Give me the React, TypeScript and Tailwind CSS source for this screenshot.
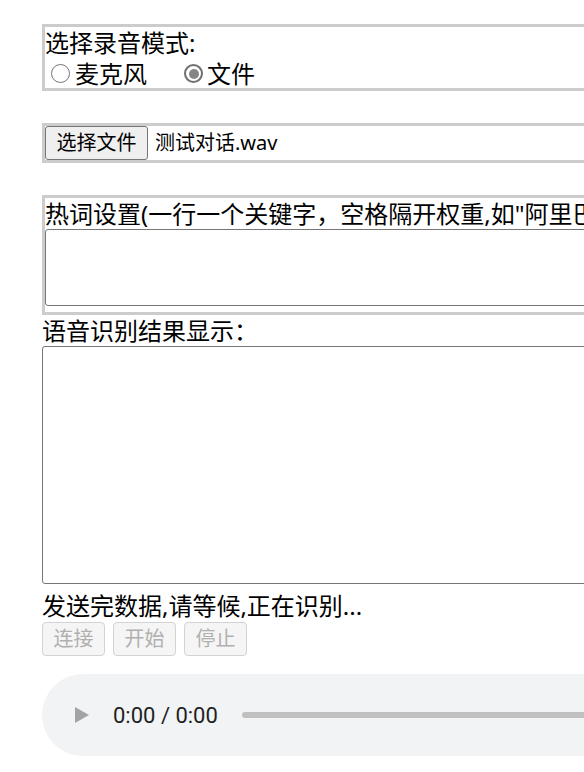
import React from "react"

function Radio({ checked }: { checked?: boolean }) {
  return (
    <span
      className={
        checked
          ? "inline-flex h-[19px] w-[19px] shrink-0 items-center justify-center rounded-full border-2 border-[#6f6f6f] bg-white"
          : "inline-flex h-[19px] w-[19px] shrink-0 items-center justify-center rounded-full border-[1.5px] border-[#767676] bg-white"
      }
    >
      {checked && <span className="h-[10px] w-[10px] rounded-full bg-[#858585]" />}
    </span>
  )
}

function DisabledButton({ label }: { label: string }) {
  return (
    <button
      disabled
      className="flex h-[34px] w-[63px] items-center justify-center rounded-[4px] border border-[#d3d3d3] bg-[#f5f5f5] text-[20px] leading-none text-[#b0b0b0]"
    >
      {label}
    </button>
  )
}

export default function App() {
  return (
    <div className="h-[772px] w-[584px] overflow-hidden bg-white font-['Noto_Sans','Noto_Sans_CJK_SC',sans-serif] text-[24px] text-black">
      <div className="ml-[42px] w-[760px] pt-[24px]">
        {/* recorder mode */}
        <div className="border-[3px] border-[#cccccc]">
          <div className="h-[32px] leading-[32px] whitespace-nowrap">选择录音模式:</div>
          <div className="flex h-[29px] items-center whitespace-nowrap">
            <label className="ml-[6px] flex items-center gap-[5px]">
              <Radio />
              <span>麦克风</span>
            </label>
            <label className="ml-[37px] flex items-center gap-[4px]">
              <Radio checked />
              <span>文件</span>
            </label>
          </div>
        </div>

        <div className="h-[32px]" />

        {/* file picker */}
        <div className="flex h-[40px] items-center border-[3px] border-[#cccccc]">
          <button className="flex h-[34px] w-[103px] items-center justify-center rounded-[3px] border border-[#767676] bg-[#efefef] text-[20px] leading-none">
            选择文件
          </button>
          <span className="ml-[7px] text-[20px] whitespace-nowrap">测试对话.wav</span>
        </div>

        <div className="h-[32px]" />

        {/* hotwords */}
        <div className="border-[3px] border-[#cccccc] pb-[6px]">
          <div className="h-[31px] leading-[31px] whitespace-nowrap">
            热词设置(一行一个关键字，空格隔开权重,如"阿里巴巴 20")：
          </div>
          <textarea
            readOnly
            className="block h-[77px] w-full resize-none rounded-[3px] border border-[#767676] bg-white"
          />
        </div>

        <div className="h-[31px] leading-[31px] whitespace-nowrap">语音识别结果显示：</div>
        <textarea
          readOnly
          className="block h-[238px] w-full resize-none rounded-[3px] border border-[#767676] bg-white"
        />

        <div className="mt-[6px] h-[32px] leading-[32px] whitespace-nowrap">发送完数据,请等候,正在识别...</div>

        <div className="flex gap-[8px]">
          <DisabledButton label="连接" />
          <DisabledButton label="开始" />
          <DisabledButton label="停止" />
        </div>

        {/* audio player */}
        <div className="mt-[18px] flex h-[82px] w-full items-center rounded-full bg-[#f1f3f4] pl-[33px]">
          <svg width="14" height="16" viewBox="0 0 14 16" className="shrink-0">
            <polygon points="0,0 14,8 0,16" fill="#a3a3a3" />
          </svg>
          <span className="ml-[24px] font-['Roboto',sans-serif] text-[22px] text-[#1f1f1f] whitespace-nowrap">
            0:00 / 0:00
          </span>
          <div className="ml-[24px] h-[6px] flex-1 rounded-full bg-[#c0c0c0]" />
        </div>
      </div>
    </div>
  )
}
